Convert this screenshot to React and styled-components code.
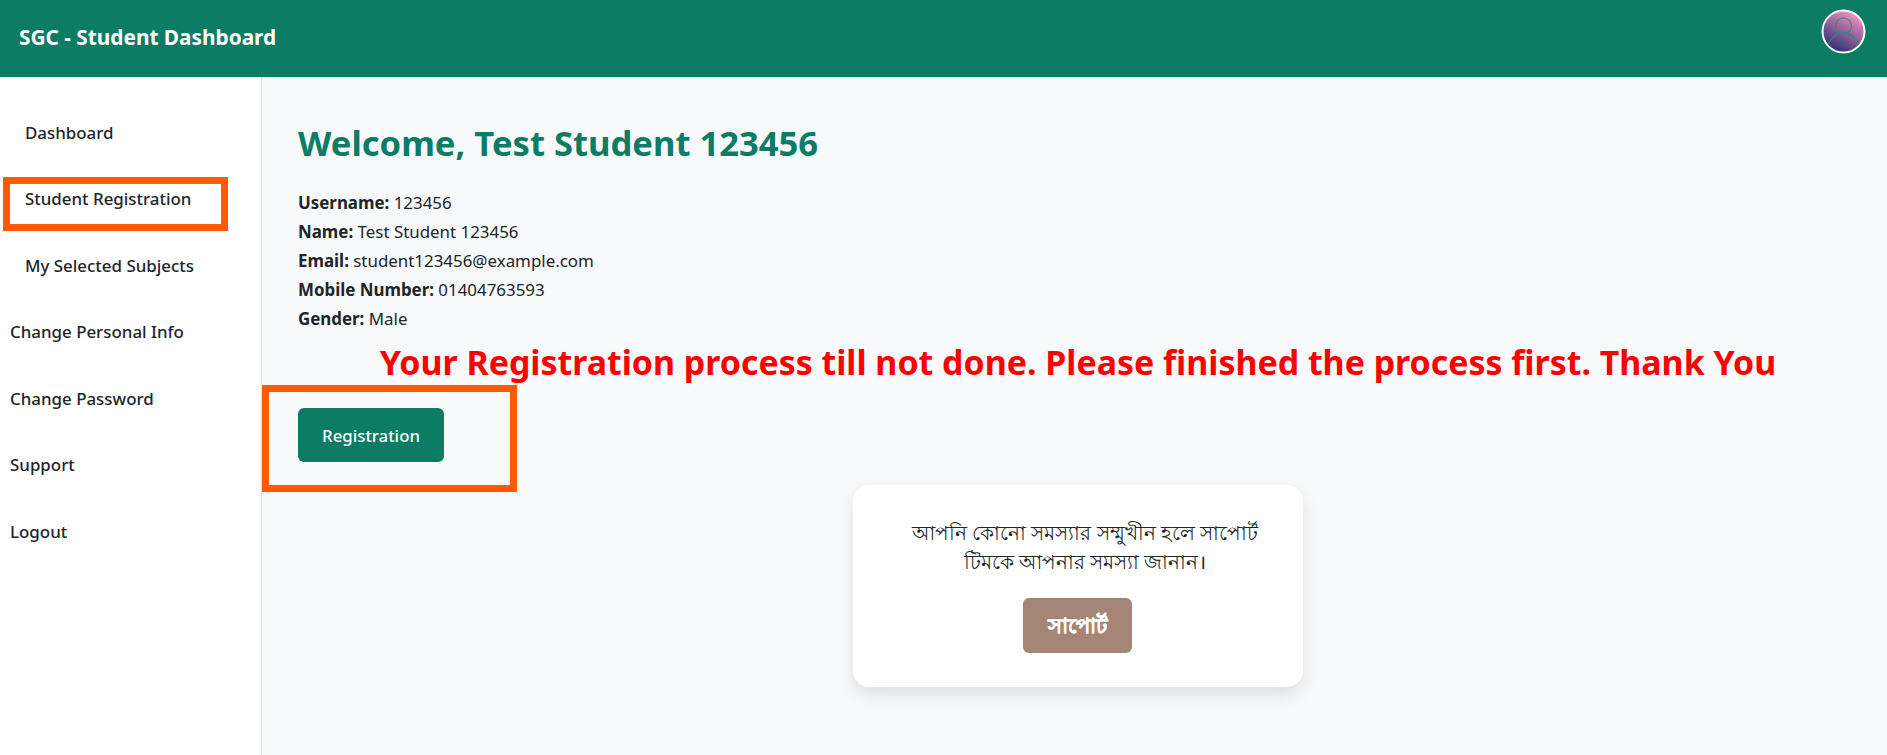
import React from "react";
import styled, { createGlobalStyle } from "styled-components";

const GlobalStyle = createGlobalStyle`
  * { box-sizing: border-box; }
  html, body { margin: 0; height: 100%; }
  body {
    font-family: "Noto Sans", "Open Sans", "Liberation Sans", sans-serif;
    font-size: 16px;
    color: #212529;
    background: #f8f9fa;
    overflow: hidden;
  }
`;

const Page = styled.div`
  height: 755px;
  display: flex;
  flex-direction: column;
`;

const Header = styled.header`
  height: 77px;
  flex-shrink: 0;
  padding: 0 21px 0 19px;
  display: flex;
  align-items: center;
  justify-content: space-between;
  background: #0c7c64;
`;

const Brand = styled.div`
  color: #fff;
  font-size: 20.8px;
  font-weight: 700;
  padding-bottom: 3px;
`;

const Avatar = styled.svg`
  width: 45px;
  height: 45px;
  margin: 0 0 15px;
`;

const Body = styled.div`
  flex: 1;
  display: flex;
  min-height: 0;
`;

const Sidebar = styled.nav`
  position: relative;
  width: 262px;
  flex-shrink: 0;
  padding-top: 22px;
  background: #fff;
  border-right: 1px solid #dee2e6;
`;

const NavItem = styled.a`
  display: flex;
  align-items: center;
  height: 66.5px;
  padding-left: ${(p) => (p.$nested ? "25px" : "10px")};
  color: #212529;
  font-size: 16.9px;
  font-weight: 500;
`;

const Highlight = styled.div`
  position: absolute;
  border: 7px solid #ff5a00;
  pointer-events: none;
`;

const SidebarHighlight = styled(Highlight)`
  left: 3px;
  top: 100px;
  width: 225px;
  height: 54px;
`;

const Main = styled.main`
  position: relative;
  flex: 1;
  padding: 46px 36px 0;
`;

const Title = styled.h1`
  margin: 0 0 25px;
  color: #0c7c64;
  font-size: 34.6px;
  line-height: 40px;
  font-weight: 700;
`;

const InfoLine = styled.div`
  height: 29px;
  line-height: 29px;
  font-size: 16.9px;
  b { font-weight: 700; }
`;

const Notice = styled.div`
  margin: 7px -36px 0;
  padding-left: 7px;
  text-align: center;
  color: #ff0000;
  font-size: 33.9px;
  line-height: 44px;
  font-weight: 700;
`;

const RegisterButton = styled.button`
  display: block;
  width: 146px;
  height: 54px;
  margin-top: 24px;
  border: 0;
  border-radius: 6px;
  background: #0c7c64;
  color: #fff;
  font: 500 16.8px "Noto Sans", sans-serif;
`;

const MainHighlight = styled(Highlight)`
  left: 0;
  top: 308px;
  width: 255px;
  height: 107px;
`;

const SupportCard = styled.section`
  width: 450px;
  height: 202px;
  margin: 23px 0 0 555px;
  padding: 33px 33px 0 47px;
  background: #fff;
  border-radius: 16px;
  box-shadow: 0 8px 16px rgba(0, 0, 0, 0.1);
  text-align: center;
`;

const SupportText = styled.p`
  margin: 0 0 22px;
  font-size: 19.9px;
  line-height: 29px;
`;

const SupportButton = styled.button`
  display: block;
  width: 109px;
  height: 55px;
  margin-left: 123px;
  padding: 3px 0 0;
  border: 0;
  border-radius: 6px;
  background: #a58576;
  color: #fff;
  font: 700 21px "Noto Sans", sans-serif;
  -webkit-text-stroke: 0.4px #fff;
`;

const navItems = [
  ["Dashboard", true],
  ["Student Registration", true],
  ["My Selected Subjects", true],
  ["Change Personal Info", false],
  ["Change Password", false],
  ["Support", false],
  ["Logout", false],
];

const info = [
  ["Username:", "123456"],
  ["Name:", "Test Student 123456"],
  ["Email:", "student123456@example.com"],
  ["Mobile Number:", "01404763593"],
  ["Gender:", "Male"],
];

export default function App() {
  return (
    <Page>
      <GlobalStyle />
      <Header>
        <Brand>SGC - Student Dashboard</Brand>
        <Avatar viewBox="0 0 45 45">
          <defs>
            <linearGradient id="avatarFill" x1="0.25" y1="0.95" x2="0.75" y2="0.05">
              <stop offset="0" stopColor="#2a2f70" />
              <stop offset="1" stopColor="#f294c2" />
            </linearGradient>
            <clipPath id="avatarClip">
              <circle cx="22.5" cy="22.5" r="20" />
            </clipPath>
          </defs>
          <circle cx="22.5" cy="22.5" r="21" fill="url(#avatarFill)" stroke="#fff" strokeWidth="2" />
          <g clipPath="url(#avatarClip)" fill="none" stroke="#2f8a80" strokeWidth="1.2">
            <circle cx="22.500" cy="17" r="8" />
            <path d="M6 42c1-11 8-18 16.500-18S38 31 39 42" />
          </g>
        </Avatar>
      </Header>
      <Body>
        <Sidebar>
          {navItems.map(([label, nested]) => (
            <NavItem key={label} $nested={nested}>{label}</NavItem>
          ))}
          <SidebarHighlight />
        </Sidebar>
        <Main>
          <Title>Welcome, Test Student 123456</Title>
          {info.map(([label, value]) => (
            <InfoLine key={label}><b>{label}</b> {value}</InfoLine>
          ))}
          <Notice>Your Registration process till not done. Please finished the process first. Thank You</Notice>
          <RegisterButton>Registration</RegisterButton>
          <MainHighlight />
          <SupportCard>
            <SupportText>আপনি কোনো সমস্যার সম্মুখীন হলে সাপোর্ট টিমকে আপনার সমস্যা জানান।</SupportText>
            <SupportButton>সাপোর্ট</SupportButton>
          </SupportCard>
        </Main>
      </Body>
    </Page>
  );
}
